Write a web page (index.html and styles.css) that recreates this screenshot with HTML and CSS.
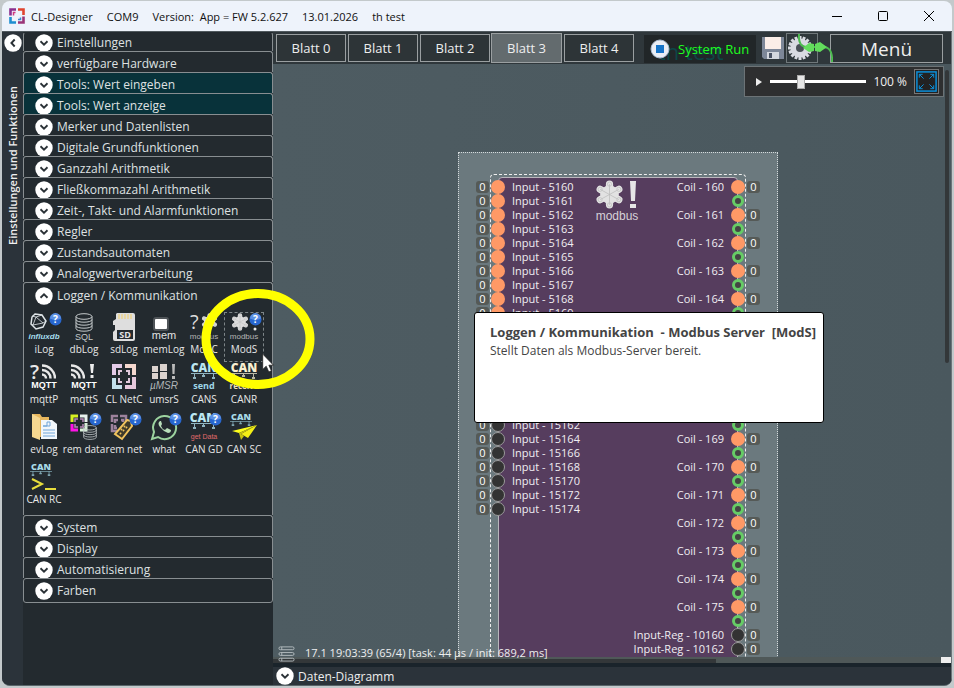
FILE: index.html
```html
<!DOCTYPE html>
<html lang="de">
<head>
<meta charset="utf-8">
<title>CL-Designer</title>
<link rel="stylesheet" href="styles.css">
</head>
<body>
<svg class="defs" aria-hidden="true">
  <symbol id="down" viewBox="0 0 18 18"><circle cx="9" cy="9" r="8.700" fill="#fff"/><path d="M5.500 7.300 9 10.600l3.500-3.300" fill="none" stroke="#2a3136" stroke-width="1.900"/></symbol>
  <symbol id="help" viewBox="0 0 14 14"><circle cx="7" cy="7" r="6.500" fill="#2766cf"/><path d="M1 6a6 6 0 0 1 12 0Q7 9 1 6z" fill="#5b90e4"/><text x="7" y="11" font-size="11" font-weight="700" fill="#fff" text-anchor="middle">?</text></symbol>
  <symbol id="flower" viewBox="0 0 28 28"><g stroke="currentColor" stroke-width="7" stroke-linecap="round"><path d="M14 4v20M5 9l18 10M5 19 23 9"/></g><circle cx="14" cy="14" r="9" fill="currentColor"/><path d="M14 4v20M5 9l18 10M5 19 23 9" stroke="#bbb" stroke-width=".7"/><g fill="none" stroke="#c2c2c2" stroke-width=".8"><circle cx="14" cy="4" r="2"/><circle cx="14" cy="24" r="2"/><circle cx="5" cy="9" r="2"/><circle cx="23" cy="9" r="2"/><circle cx="5" cy="19" r="2"/><circle cx="23" cy="19" r="2"/></g></symbol>
  <symbol id="wave" viewBox="0 0 14 15"><g fill="none" stroke="#e8e8e8" stroke-width="2.500"><path d="M0 1.500a13 13 0 0 1 13 13M0 6a8.500 8.500 0 0 1 8.500 8.500M0 10.500a4 4 0 0 1 4 4"/></g></symbol>
  <symbol id="bus" viewBox="0 0 26 8"><g fill="currentColor"><path d="M0 1h26v1H0zM3 2h1v4H3zM12 2h1v2h-1zM22 2h1v4h-1z"/><path d="M2 5h3v2H2zM11 3h3v2h-3zM21 5h3v2h-3z"/></g></symbol>
  <symbol id="db" viewBox="0 0 18 19"><g fill="none" stroke="#c4c9cb" stroke-width="1"><ellipse cx="9" cy="3.500" rx="8" ry="2.800"/><path d="M1 3.500v12c0 3.600 16 3.600 16 0v-12M1 6.500c0 3.600 16 3.600 16 0M1 9.500c0 3.600 16 3.600 16 0M1 12.500c0 3.600 16 3.600 16 0"/></g></symbol>
</svg>

<div class="window">
  <header class="titlebar">
    <svg class="logo" viewBox="0 0 16 16" fill="none" stroke-width="2.600"><path d="M7 1.500H1.500v6" stroke="#8b2f8f"/><path d="M9 1.500h5.500V7" stroke="#e0442e"/><path d="M1.500 9v5.500H7" stroke="#1f8fd0"/><path d="M14.500 8.500v6H9" stroke="#9a3577"/><path d="M6.500 4.500h-2v3" stroke="#d03a80" stroke-width="1.500"/><path d="M9 11.500h2.500v-2" stroke="#3d86cf" stroke-width="1.500"/></svg>
    <span>CL-Designer</span><span>COM9</span><span>Version:&nbsp; App = FW 5.2.627</span><span>13.01.2026</span><span>th test</span>
    <div class="winbuttons">
      <button aria-label="Minimieren"><svg viewBox="0 0 12 12"><path d="M1 6.500h10" stroke="#000"/></svg></button>
      <button aria-label="Maximieren"><svg viewBox="0 0 12 12"><rect x="1.500" y="1.500" width="9" height="9" rx="1" fill="none" stroke="#000"/></svg></button>
      <button aria-label="Schließen"><svg viewBox="0 0 12 12"><path d="m1 1 10 10M11 1 1 11" stroke="#000"/></svg></button>
    </div>
  </header>

  <div class="workspace">
    <div class="rail">
      <button class="round left" aria-label="Einklappen"><svg viewBox="0 0 18 18"><use href="#down"/></svg></button>
      <span class="raillabel">Einstellungen und Funktionen</span>
    </div>

    <nav class="sidebar">
      <button class="group"><svg><use href="#down"/></svg>Einstellungen</button>
      <button class="group"><svg><use href="#down"/></svg>verfügbare Hardware</button>
      <button class="group teal"><svg><use href="#down"/></svg>Tools: Wert eingeben</button>
      <button class="group teal"><svg><use href="#down"/></svg>Tools: Wert anzeige</button>
      <button class="group"><svg><use href="#down"/></svg>Merker und Datenlisten</button>
      <button class="group"><svg><use href="#down"/></svg>Digitale Grundfunktionen</button>
      <button class="group"><svg><use href="#down"/></svg>Ganzzahl Arithmetik</button>
      <button class="group"><svg><use href="#down"/></svg>Fließkommazahl Arithmetik</button>
      <button class="group"><svg><use href="#down"/></svg>Zeit-, Takt- und Alarmfunktionen</button>
      <button class="group"><svg><use href="#down"/></svg>Regler</button>
      <button class="group"><svg><use href="#down"/></svg>Zustandsautomaten</button>
      <button class="group"><svg><use href="#down"/></svg>Analogwertverarbeitung</button>
      <section class="open">
        <button class="group"><svg class="up"><use href="#down"/></svg>Loggen / Kommunikation</button>
        <div class="tools">
          <button class="tool"><svg viewBox="0 0 40 29"><g fill="none" stroke="#dfe5e8"><path d="m11 2 7 1 4 6-3 6-7 2-5-5 1-7z" stroke-width="1.500"/><path d="m12 5 7 6-10 2zM12 5 8 4M19 11l3-2M9 13l-2-1M18 3l-6 2" stroke-width=".8"/></g><use href="#help" x="25" y="1" width="13" height="13"/><text x="20" y="27" class="mid arial" font-size="8" font-weight="700" font-style="italic" fill="#a4dcec">influxdb</text></svg>iLog</button>
          <button class="tool"><svg viewBox="0 0 40 29"><use href="#db" x="11" y="1" width="18" height="19"/><text x="20" y="28" class="mid arial" font-size="9" fill="#c4c9cb">SQL</text></svg>dbLog</button>
          <button class="tool"><svg viewBox="0 0 40 29"><path d="M13 1h16q2 0 2 2v24q0 2-2 2H11q-2 0-2-2v-7l2-2v-5H9v-4l3-2V2z" fill="#dedede"/><path d="M15 2v5m3-5v5m3-5v5m3-5v5m3-5v5" stroke="#e9d7a3" stroke-width="2"/><rect x="13" y="18" width="16" height="9" fill="#252b2f"/><text x="21" y="26" class="mid" font-size="9" font-weight="700" fill="#e5e5e5">SD</text></svg>sdLog</button>
          <button class="tool"><svg viewBox="0 0 40 29"><rect x="9" y="5" width="16" height="14" rx="3" fill="#909496" opacity=".4"/><rect x="11" y="7" width="12" height="10" rx="1" fill="#fff"/><text x="20" y="27" class="mid arial" font-size="11" fill="#e2e2e2">mem</text></svg>memLog</button>
          <button class="tool"><svg viewBox="0 0 40 29"><text x="6" y="17" font-size="20" fill="#ddd">?</text><svg x="17" y="1" width="17" height="17" viewBox="0 0 28 28" color="#ddd"><use href="#flower"/></svg><text x="20" y="27" class="mid arial" font-size="8" fill="#b5b5b5">modbus</text></svg>ModC</button>
          <button class="tool selected"><svg viewBox="0 0 40 29"><svg x="7" y="1" width="18" height="18" viewBox="0 0 28 28" color="#ddd"><use href="#flower"/></svg><circle cx="31" cy="17" r="1.500" fill="#eee"/><use href="#help" x="25" y="1" width="13" height="13"/><text x="20" y="27" class="mid arial" font-size="8" fill="#b5b5b5">modbus</text></svg>ModS</button>

          <button class="tool"><svg viewBox="0 0 40 29"><text x="6" y="17" font-size="20" font-weight="600" fill="#e8e8e8">?</text><use href="#wave" x="18" y="2" width="14" height="15"/><text x="20" y="26" class="mid arial" font-size="9" font-weight="700" fill="#fff">MQTT</text></svg>mqttP</button>
          <button class="tool"><svg viewBox="0 0 40 29"><use href="#wave" x="7" y="2" width="14" height="15"/><path d="M26 2h4l-1 9h-2zM26.500 13h3v3h-3z" fill="#eee"/><text x="20" y="26" class="mid arial" font-size="9" font-weight="700" fill="#fff">MQTT</text></svg>mqttS</button>
          <button class="tool"><svg viewBox="0 0 40 29" fill="none" stroke-width="4"><path d="M18 4H10v9" stroke="#e4cbe8"/><path d="M21 4h9v9" stroke="#f5d8cf"/><path d="M10 16v9h8" stroke="#c3e0ec"/><path d="M30 15v10h-9" stroke="#e6c8dc"/><path d="M18 9h-3v4M15 16v4h3M22 9h3v4M25 16v4h-3" stroke="#e1c9dc" stroke-width="2"/></svg>CL NetC</button>
          <button class="tool"><svg viewBox="0 0 40 29"><g fill="#dbd2ce"><path d="M16 2h7v7h-7zM8 4h6v6H8zM8 11h6v6H8zM16 10h7v7h-7z"/></g><path d="M28 2h3l-.5 10h-2zM28 14h3v3h-3z" fill="#bbb"/><text x="20" y="27" class="mid arial" font-size="10" font-style="italic" fill="#b2b6b8">µMSR</text></svg>umsrS</button>
          <button class="tool"><svg viewBox="0 0 40 29" color="#8fb4c0"><text x="20" y="10" class="mid" font-size="12" font-weight="800" fill="#bce6f0">CAN</text><use href="#bus" x="7" y="10" width="26" height="8"/><text x="20" y="27" class="mid" font-size="9" font-weight="700" fill="#9ed6e8">send</text></svg>CANS</button>
          <button class="tool"><svg viewBox="0 0 40 29" color="#b9b7a4"><text x="20" y="10" class="mid" font-size="12" font-weight="800" fill="#f8efd2">CAN</text><use href="#bus" x="7" y="10" width="26" height="8"/><text x="20" y="27" class="mid" font-size="8" font-weight="700" fill="#eee0b8">receive</text></svg>CANR</button>

          <button class="tool"><svg viewBox="0 0 40 29"><path d="M8 2h8l2 3h7v20H8z" fill="#e7b75e"/><path d="m8 2 8 4v22l-8-3z" fill="#f6d891"/><path d="M17 8h11l5 4v15H17z" fill="#f2f7fb"/><path d="M19 14h4v-4h3v4h-7M19 18h12M19 21h12M19 24h12" stroke="#70a5d8" fill="none"/></svg>evLog</button>
          <button class="tool"><svg viewBox="0 0 40 29" fill="none" stroke-width="3"><path d="M14 4H8v6" stroke="#d8f222"/><path d="M16 4h6v6" stroke="#e8f1ed"/><path d="M8 12v6h6" stroke="#ff13e6"/><path d="M22 11v7h-6" stroke="#d8f0d8"/><path d="M11 10V7h3m2 0h3v3m0 2v3h-3m-2 0h-3v-3" stroke="#b788b6" stroke-width="1.500"/><use href="#db" x="17" y="13" width="18" height="15"/><use href="#help" x="25" y="1" width="13" height="13"/></svg>rem data</button>
          <button class="tool"><svg viewBox="0 0 40 29" fill="none" stroke-width="2"><path d="M14 4H8v6M16 4h6v5M8 12v7h6M14 8h-3v3m0 2v3h2M17 8h2v2" stroke="#9d829d" stroke-width="2.500"/><path d="m23 8 4 1 1 5-10 13-7-5z" stroke="#f1c35e" fill="#3e3a2b"/><path d="m17 17 1 1m2-4 1 1m-5 6 1 1m2-4 1 1m2-4 1 1" stroke="#f1c35e"/><use href="#help" x="25" y="1" width="13" height="13"/></svg>rem net</button>
          <button class="tool"><svg viewBox="0 0 40 29"><path d="m8 27 2-7a11.500 11.500 0 1 1 4 5z" fill="none" stroke="#9cd39f" stroke-width="2"/><path d="M16 9q-3 2 0 6t8 6q3 0 3-3l-4-2-2 2q-3-1-4-4l1-2-1-3z" fill="#b8dfba"/><use href="#help" x="25" y="1" width="13" height="13"/></svg>what</button>
          <button class="tool"><svg viewBox="0 0 40 29" color="#8fb4c0"><text x="19" y="10" class="mid" font-size="12" font-weight="800" fill="#bce6f0">CAN</text><use href="#bus" x="7" y="10" width="26" height="8"/><use href="#help" x="25" y="1" width="13" height="13"/><text x="20" y="27" class="mid arial" font-size="7" fill="#e06b6b">get Data</text></svg>CAN GD</button>
          <button class="tool"><svg viewBox="0 0 40 29" color="#7ea4b0"><text x="17" y="8" class="mid" font-size="9" font-weight="800" fill="#a8dbe8">CAN</text><use href="#bus" x="6" y="8" width="22" height="7"/><path d="m33 13-25 6 7 2z" fill="#ffff1c"/><path d="m33 13-16 9 7 4z" fill="#f3ef16"/><path d="m15 21 2 7 3-4-3-2 16-9z" fill="#c8c40e"/></svg>CAN SC</button>

          <button class="tool"><svg viewBox="0 0 40 29" color="#7ea4b0"><text x="17" y="8" class="mid" font-size="9" font-weight="800" fill="#a8dbe8">CAN</text><use href="#bus" x="6" y="8" width="22" height="7"/><path d="m8 17 10 5-10 5M21 27h11" fill="none" stroke="#e8de3c" stroke-width="2"/></svg>CAN RC</button>
        </div>
      </section>
      <button class="group"><svg><use href="#down"/></svg>System</button>
      <button class="group"><svg><use href="#down"/></svg>Display</button>
      <button class="group"><svg><use href="#down"/></svg>Automatisierung</button>
      <button class="group last"><svg><use href="#down"/></svg>Farben</button>
    </nav>

    <main class="main">
      <div class="toolbar">
        <button class="tab">Blatt 0</button>
        <button class="tab">Blatt 1</button>
        <button class="tab">Blatt 2</button>
        <button class="tab active">Blatt 3</button>
        <button class="tab">Blatt 4</button>
        <div class="status">
          <span class="ghost" aria-hidden="true">th test</span>
          <svg viewBox="0 0 20 20"><circle cx="10" cy="10" r="9" fill="#e9eef6" stroke="#a9bbd0"/><rect x="6" y="6" width="8" height="8" fill="#1674c8"/></svg>
          <span>System Run</span>
        </div>
        <button class="icon" aria-label="Speichern"><svg viewBox="0 0 24 24"><path d="M1 1h22v22H3l-2-2z" fill="#7d8798"/><path d="M4 1h16v12H4z" fill="#fbeee8"/><path d="M6 16h12v7H6z" fill="#d3d7de"/><path d="M8 17h3v5H8z" fill="#4a5364"/></svg></button>
        <button class="icon gear" aria-label="Verbindung"><svg viewBox="0 0 46 30"><path d="M13 2v24M1 14h24M4.500 5.500l17 17M4.500 22.500l17-17M8.500 3l9 22M2 9.500l22 9M2 18.500l22-9M8.500 25l9-22" stroke="#d9dbe2" stroke-width="3"/><circle cx="13" cy="14" r="7" fill="none" stroke="#d9dbe2" stroke-width="5"/><circle cx="13" cy="14" r="4" fill="#4a5058"/><path d="M12 0q-1 13 8 13h16q10 0 9 15" fill="none" stroke="#4dbb50" stroke-width="2"/><path d="m16 14 6-5 5 1v7l-5 1zM28 10l5-2 7 5-7 5-5-1z" fill="#62dc5c"/></svg></button>
        <button class="menu">Menü</button>
      </div>

      <div class="canvas">
        <article class="node">
          <div class="block">
            <div class="mark"><svg viewBox="0 0 46 46"><svg x="1" y="1" width="29" height="29" viewBox="0 0 28 28" color="#e2e2e2"><use href="#flower"/></svg><path d="M36 2h6l-1 20h-4zM36 25h6v4h-6z" fill="#e6e6e6"/><text x="23" y="41" class="mid arial" font-size="12" fill="#d6d2d8">modbus</text></svg></div>
            <ul class="ports in">
              <li><b>0</b><i></i>Input - 5160</li><li><b>0</b><i></i>Input - 5161</li><li><b>0</b><i></i>Input - 5162</li><li><b>0</b><i></i>Input - 5163</li><li><b>0</b><i></i>Input - 5164</li><li><b>0</b><i></i>Input - 5165</li><li><b>0</b><i></i>Input - 5166</li><li><b>0</b><i></i>Input - 5167</li><li><b>0</b><i></i>Input - 5168</li><li><b>0</b><i></i>Input - 5169</li>
              <li></li><li></li><li></li><li></li><li></li><li></li><li></li>
              <li><b>0</b><i class="reg"></i>Input - 15162</li><li><b>0</b><i class="reg"></i>Input - 15164</li><li><b>0</b><i class="reg"></i>Input - 15166</li><li><b>0</b><i class="reg"></i>Input - 15168</li><li><b>0</b><i class="reg"></i>Input - 15170</li><li><b>0</b><i class="reg"></i>Input - 15172</li><li><b>0</b><i class="reg"></i>Input - 15174</li>
            </ul>
            <ul class="ports out">
              <li><b>0</b><i></i>Coil - 160</li><li><i class="ring"></i></li><li><b>0</b><i></i>Coil - 161</li><li><i class="ring"></i></li><li><b>0</b><i></i>Coil - 162</li><li><i class="ring"></i></li><li><b>0</b><i></i>Coil - 163</li><li><i class="ring"></i></li><li><b>0</b><i></i>Coil - 164</li><li><i class="ring"></i></li>
              <li></li><li></li><li></li><li></li><li></li><li></li><li></li><li><i class="ring"></i></li>
              <li><b>0</b><i></i>Coil - 169</li><li><i class="ring"></i></li><li><b>0</b><i></i>Coil - 170</li><li><i class="ring"></i></li><li><b>0</b><i></i>Coil - 171</li><li><i class="ring"></i></li><li><b>0</b><i></i>Coil - 172</li><li><i class="ring"></i></li><li><b>0</b><i></i>Coil - 173</li><li><i class="ring"></i></li><li><b>0</b><i></i>Coil - 174</li><li><i class="ring"></i></li><li><b>0</b><i></i>Coil - 175</li><li><i class="ring"></i></li>
              <li><b>0</b><i class="reg"></i>Input-Reg - 10160</li><li><b>0</b><i class="reg"></i>Input-Reg - 10162</li>
            </ul>
          </div>
        </article>
        <div class="zoombar">
          <svg class="play" viewBox="0 0 8 10"><path d="M1 1v8l6-4z" fill="#eee"/></svg>
          <input type="range" min="0" max="100" value="31" aria-label="Zoom">
          <span>100 %</span>
          <button aria-label="Einpassen"><svg viewBox="0 0 24 24" fill="none" stroke="#0a93e0"><rect x="2" y="2" width="20" height="20" stroke-width="1.500"/><path d="M9 9 4.500 4.500M4.500 8V4.500H8M15 9l4.500-4.500M16 4.500h3.500V8M9 15l-4.500 4.500M4.500 16v3.500H8M15 15l4.500 4.500M19.500 16v3.500H16"/></svg></button>
        </div>
        <div class="vthumb"></div>
      </div>
      <div class="hscroll"><div class="hthumb"></div><div class="corner"></div></div>
      <div class="taskline"><svg viewBox="0 0 18 18" fill="none" stroke="#b4bcbf"><rect x="1" y="2" width="16" height="3" rx="1.500"/><rect x="1" y="8" width="16" height="3" rx="1.500"/><rect x="1" y="14" width="16" height="3" rx="1.500"/><path d="M4 2v3M4 8v3M4 14v3"/></svg>17.1 19:03:39 (65/4) [task: 44 µs / init: 689,2 ms]</div>
      <button class="bottom"><svg><use href="#down"/></svg>Daten-Diagramm</button>
    </main>
  </div>
</div>

<div class="tooltip" role="tooltip"><strong>Loggen / Kommunikation &nbsp;- Modbus Server &nbsp;[ModS]</strong><p>Stellt Daten als Modbus-Server bereit.</p></div>
<svg class="halo" viewBox="0 0 114 100"><ellipse cx="57" cy="50" rx="52" ry="45.500" fill="none" stroke="#ff0" stroke-width="9"/></svg>
<svg class="cursor" viewBox="0 0 12 20"><path d="M.7 1v15.500l3.500-3.300 2.600 5.800 2.600-1.200-2.500-5.600h4.600z" fill="#fff" stroke="#222" stroke-width=".8"/></svg>
</body>
</html>
```
FILE: styles.css
```css
* { box-sizing: border-box; }
body { margin: 0; height: 100vh; background: #c3c9cb; font-family: "Open Sans", "Noto Sans", sans-serif; font-size: 13px; color: #dfe1e2; overflow: hidden; }
button { font: inherit; color: inherit; background: none; border: 0; padding: 0; margin: 0; }
svg { display: block; flex: none; overflow: visible; }
.defs { position: absolute; width: 0; height: 0; }
.mid { text-anchor: middle; }
.arial { font-family: "Liberation Sans", sans-serif; }

.window { height: 100vh; padding: 1px 2px 2px; display: flex; flex-direction: column; }
.titlebar { height: 30px; flex: none; display: flex; align-items: center; gap: 14px; padding-left: 7px; background: #eef3fb; color: #111; font-size: 11px; border-radius: 8px 8px 0 0; white-space: nowrap; }
.logo { width: 16px; height: 16px; margin-right: -8px; }
.winbuttons { margin-left: auto; display: flex; }
.winbuttons button { width: 46px; height: 30px; display: grid; place-items: center; }
.winbuttons svg { width: 12px; height: 12px; }

.workspace { flex: 1; min-height: 0; display: flex; border-radius: 0 0 8px 8px; overflow: hidden; background: #2b333a; border-top: 1px solid #50595e; border-bottom: 1px solid #59666a; }
.rail { width: 21px; flex: none; display: flex; flex-direction: column; align-items: center; padding-top: 2px; gap: 34px; background: #2b333a; }
.round svg { width: 18px; height: 18px; }
.left svg { transform: rotate(90deg); }
.raillabel { writing-mode: vertical-rl; transform: rotate(180deg); font-size: 11px; font-weight: 600; line-height: 20px; color: #f0f0f0; white-space: nowrap; }

.sidebar { width: 250px; flex: none; background: #232a2f; display: flex; flex-direction: column; }
.group { height: 21px; width: 100%; display: flex; align-items: center; gap: 4px; padding: 4px 0 0 11px; text-align: left; border: 1px solid #888e91; border-bottom: 0; border-radius: 3px 3px 0 0; white-space: nowrap; font-size: 12px; line-height: 16px; }
.group:first-child { height: 19px; padding-top: 2px; border-top-color: transparent; }
.group svg, .bottom svg { width: 18px; height: 18px; }
.group .up { transform: rotate(180deg); }
.teal { background: #08323a; }
.last { height: 25px; border-bottom: 1px solid #888e91; border-radius: 3px; padding-top: 0; }
.open { height: 233px; border: 1px solid #888e91; border-bottom: 0; border-radius: 3px 3px 0 0; }
.open .group:first-child { border: 0; padding: 4px 0 0 11px; height: 21px; }
.tools { display: grid; grid-template-columns: repeat(6, 40px); grid-auto-rows: 50px; padding-top: 8px; }
.tool { display: flex; flex-direction: column; align-items: center; font-size: 10px; line-height: 16px; color: #e8e8e8; white-space: nowrap; }
.tool > svg { width: 40px; height: 29px; }
.selected { outline: 1px dashed #7d8588; outline-offset: -1px; }

.main { position: relative; flex: 1; min-width: 0; display: flex; flex-direction: column; background: #4c5a60; border-right: 1px solid #6b7679; }
.toolbar { height: 32px; flex: none; display: flex; align-items: flex-start; gap: 2px; padding: 2px 8px 0 3px; background: #2f373b; }
.tab { width: 70px; height: 28px; border: 1px solid #9a9fa1; background: #2d3437; color: #eee; }
.active { margin: -1px 0 0 -1px; height: 30px; width: 71px; background: #636b6e; }
.status { position: relative; width: 112px; height: 28px; margin: 1px 3px 0 8px; display: flex; align-items: center; gap: 8px; padding-left: 6px; background: #212628; color: #1fff1f; white-space: nowrap; font-size: 13px; }
.status svg { width: 20px; height: 20px; position: relative; }
.status span { position: relative; }
.status .ghost { position: absolute; left: 14px; top: 2px; font-size: 22px; line-height: 28px; color: #0d4646; }
.icon { width: 24px; height: 28px; display: grid; place-items: center; }
.icon svg { width: 24px; height: 24px; }
.gear { width: 32px; margin-left: -1px; border: 1px solid #70787b; place-items: center start; position: relative; z-index: 1; margin-top: -1px; height: 30px; }
.gear svg { width: 46px; height: 30px; }
.menu { margin-left: auto; width: 113px; height: 29px; border: 1px solid #9a9fa1; background: #2d3437; font-size: 19px; line-height: 26px; color: #eee; }

.canvas { position: relative; flex: 1; min-height: 0; overflow: hidden; background: linear-gradient(90deg, #4e5c62, #4a585e); }
.node { position: absolute; left: 185px; top: 88px; width: 320px; height: 560px; background: #6b797e; border: 1px dotted #d4dadc; padding: 21px 31px; }
.block { position: relative; height: 530px; border: 1px dashed #eee; padding: 2px 7px; border-radius: 4px; background: #6b797e; display: flex; }
.block::before { content: ""; position: absolute; inset: 2px 7px 0; background: #563d5e; border: 1px solid #b9b5bc; border-radius: 4px; }
.mark { position: absolute; left: 103px; top: 4px; }
.mark > svg { width: 46px; height: 46px; }
.ports { position: relative; list-style: none; margin: 3px 0 0; padding: 0; flex: 1; font-size: 11px; line-height: 14px; color: #f0eef2; }
.ports li { height: 14px; display: flex; align-items: center; gap: 7px; white-space: nowrap; }
.ports i { width: 14px; height: 14px; border-radius: 50%; background: #f96; flex: none; }
.ports b { width: 13px; height: 12px; border-radius: 3px; background: #555a57; font-weight: 400; line-height: 12px; text-align: center; color: #fff; }
.ports.in { margin-left: -22px; }
.ports.in b { margin-right: -5px; }
.ports.out { margin-right: -22px; }
.ports.out li { flex-direction: row-reverse; }
.ports.out b { margin-left: -5px; }
.ports i.reg { background: #333; border: 1px solid #9a9a9a; }
.ports i.ring { width: 12px; height: 12px; border: 3px solid #6c6; background: #444; margin-right: 16px; }

.zoombar { position: absolute; right: 7px; top: 2px; height: 31px; width: 200px; display: flex; align-items: center; gap: 7px; padding: 0 4px 0 10px; background: #2e2f30; border: 1px solid #6c7376; font-size: 12px; color: #f0f0f0; white-space: nowrap; }
.play { width: 8px; height: 10px; }
.zoombar input { flex: 1; min-width: 0; margin: 0; appearance: none; height: 16px; background: linear-gradient(#fff, #fff) center / 100% 3px no-repeat; }
.zoombar input::-webkit-slider-thumb { appearance: none; width: 8px; height: 14px; background: #e6e6e6; border: 1px solid #aaa; }
.zoombar button { width: 25px; height: 25px; border: 1px solid #777; background: #222; }
.zoombar button svg { width: 23px; height: 23px; }
.vthumb { position: absolute; right: 2px; top: 6px; width: 4px; height: 293px; background: #333739; border-radius: 2px; }
.taskline { position: absolute; left: 5px; bottom: 23px; display: flex; align-items: center; gap: 10px; color: #eee; font-size: 11px; line-height: 18px; white-space: nowrap; }
.taskline svg { width: 17px; height: 17px; }
.hscroll { height: 10px; flex: none; display: flex; background: #4f5858; border-bottom: 4px solid #1a242b; }
.hthumb { width: 443px; background: #333739; margin-top: 2px; }
.corner { width: 10px; margin-left: auto; background: #eee; }
.bottom { height: 18px; flex: none; background: #2b333a; display: flex; align-items: center; gap: 4px; padding-left: 3px; font-size: 12px; color: #eee; }

.tooltip { position: absolute; left: 474px; top: 312px; width: 350px; height: 111px; padding: 10px 15px; background: #fff; border: 1px solid #000; border-radius: 3px; color: #444; font-size: 12px; line-height: 18px; white-space: nowrap; }
.tooltip strong { font-size: 13px; }
.tooltip p { margin: 0; }
.halo { position: absolute; left: 201px; top: 289px; width: 114px; height: 100px; pointer-events: none; }
.cursor { position: absolute; left: 262px; top: 353px; width: 12px; height: 20px; }
```
